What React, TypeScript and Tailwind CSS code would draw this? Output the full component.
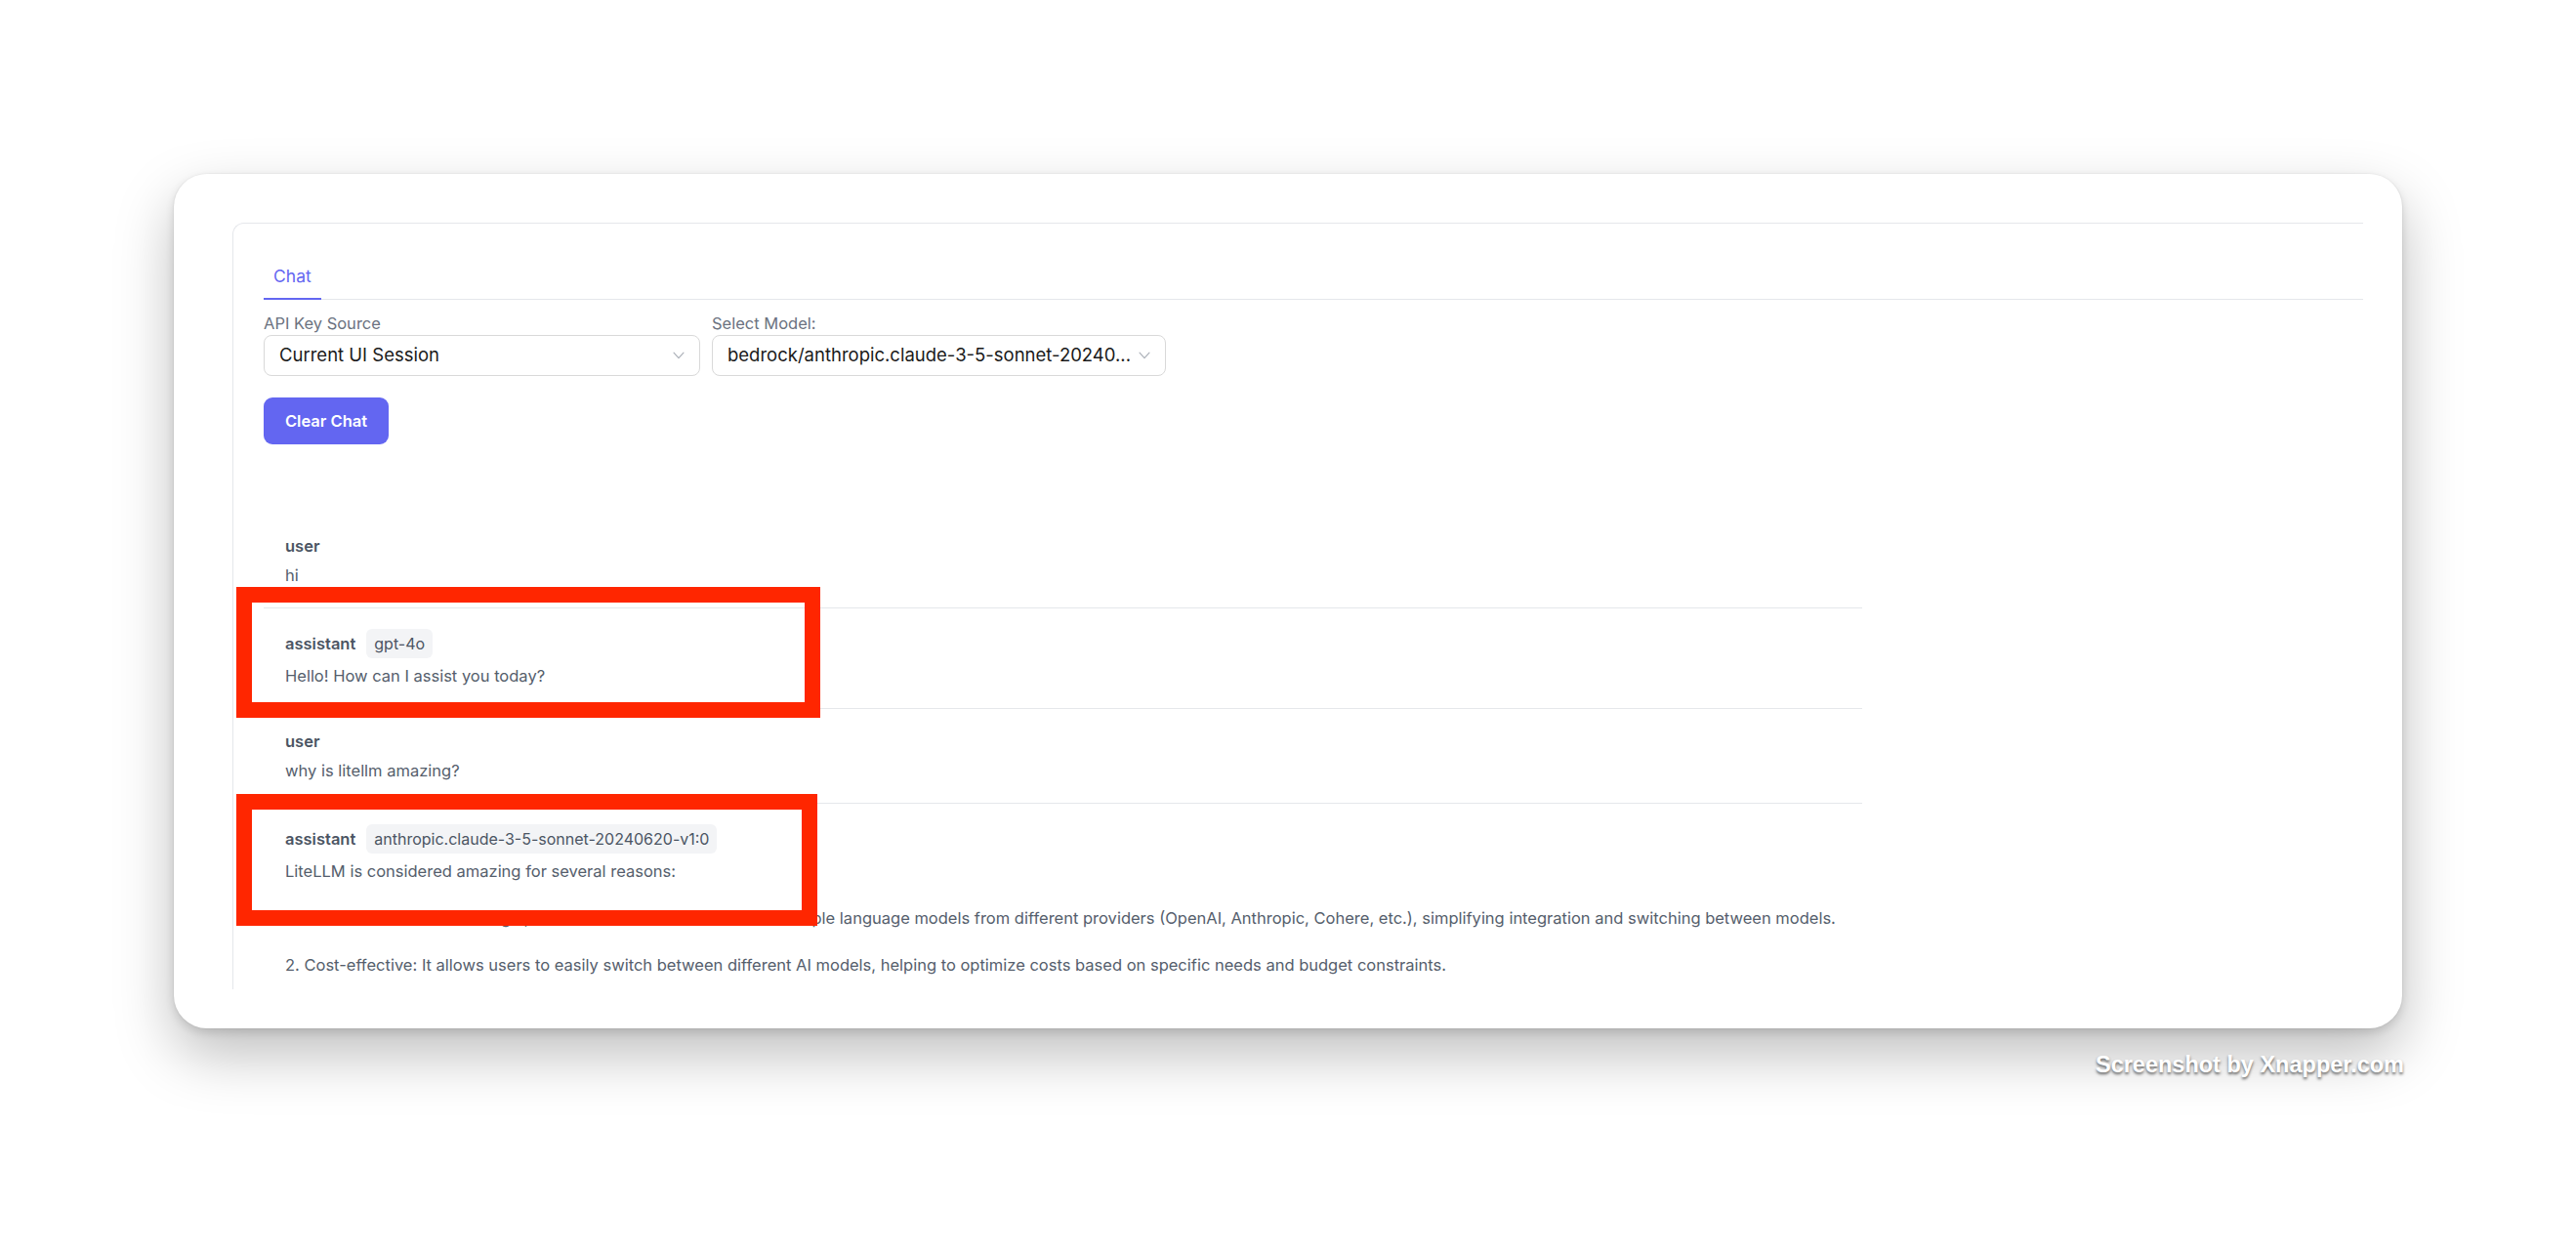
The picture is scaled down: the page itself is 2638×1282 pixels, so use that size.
import React from "react";

const Chevron = () => (
  <svg width="12" height="8" viewBox="0 0 12 8" fill="none" className="shrink-0">
    <path d="M1 1.2 L6 6.6 L11 1.2" stroke="#a9aeb6" strokeWidth="1.1" strokeLinecap="round" strokeLinejoin="round" />
  </svg>
);

type Msg = { role: string; model?: string; text: string };

const messages: Msg[] = [
  { role: "user", text: "hi" },
  { role: "assistant", model: "gpt-4o", text: "Hello! How can I assist you today?" },
  { role: "user", text: "why is litellm amazing?" },
  {
    role: "assistant",
    model: "anthropic.claude-3-5-sonnet-20240620-v1:0",
    text:
      "LiteLLM is considered amazing for several reasons:\n\n1. Unified API: Provides a single, standard interface to work with multiple language models from different providers (OpenAI, Anthropic, Cohere, etc.), simplifying integration and switching between models.\n\n2. Cost-effective: It allows users to easily switch between different AI models, helping to optimize costs based on specific needs and budget constraints.\n\n3. Load balancing: It can distribute requests across multiple models or providers, improving reliability and performance.",
  },
];

export default function App() {
  return (
    <div
      className="relative w-[2638px] h-[1282px] overflow-hidden bg-white pt-[178px] pl-[178px]"
      style={{ fontFamily: "Inter, 'Noto Sans', sans-serif" }}
    >
      <div className="w-[2282px] h-[875px] rounded-[34px] bg-white p-[40px] shadow-[0_0_0_1px_rgba(0,0,0,0.03),0_4px_10px_rgba(0,0,0,0.12),0_26px_60px_rgba(0,0,0,0.26)]">
        <div className="w-full h-full overflow-hidden">
          <div className="ml-[20px] mt-[10px] w-[2400px] h-[900px] border-l border-t border-[#e5e7eb] rounded-tl-[12px] pl-[31px] pt-[43px]">
            {/* Tabs */}
            <div className="flex border-b border-[#e5e7eb]">
              <div className="-mb-px px-[10px] pb-[11px] border-b-2 border-[#6366f1] text-[#6366f1] text-[17.5px] leading-[22px]">
                Chat
              </div>
            </div>

            {/* Selects */}
            <div className="mt-[12px] flex gap-[12px]">
              <div className="w-[447px]">
                <div className="text-[16.5px] leading-[24px] text-[#6b7280]">API Key Source</div>
                <div className="h-[42px] rounded-[8px] border border-[#d9d9d9] bg-white px-[15px] flex items-center justify-between">
                  <span className="text-[18.5px] text-[#1a1a1a]">Current UI Session</span>
                  <Chevron />
                </div>
              </div>
              <div className="w-[465px]">
                <div className="text-[16.5px] leading-[24px] text-[#6b7280]">Select Model:</div>
                <div className="h-[42px] rounded-[8px] border border-[#d9d9d9] bg-white px-[15px] flex items-center justify-between">
                  <span className="text-[18.5px] text-[#1a1a1a] whitespace-nowrap">
                    bedrock/anthropic.claude-3-5-sonnet-20240...
                  </span>
                  <Chevron />
                </div>
              </div>
            </div>

            <button className="mt-[22px] w-[128px] h-[48px] rounded-[9px] bg-[#6366f1] text-white font-semibold text-[16.5px]">
              Clear Chat
            </button>

            {/* Messages */}
            <div className="mt-[71px] w-[1637px]">
              {messages.map((m, i) => (
                <div
                  key={i}
                  className={
                    "pl-[22px] pr-[8px] pt-[21px] pb-[21px] " + (i > 0 ? "border-t border-[#e5e7eb]" : "")
                  }
                >
                  <div className="flex items-center gap-[11px] mb-[6px]">
                    <span className="font-semibold text-[16.5px] leading-[24px] text-[#4b5563]">{m.role}</span>
                    {m.model && (
                      <span className="h-[30px] px-[8px] rounded-[6px] bg-[#f3f4f6] text-[16px] text-[#4b5563] flex items-center">
                        {m.model}
                      </span>
                    )}
                  </div>
                  <div className="whitespace-pre text-[16.5px] leading-[24px] text-[#555e6c]">{m.text}</div>
                </div>
              ))}
            </div>
          </div>
        </div>
      </div>

      <div className="w-[2284px] mt-[23px] text-right">
        <span
          className="text-[23.5px] leading-[28px] font-bold text-white [text-shadow:0_2px_3px_rgba(0,0,0,0.6)]"
          style={{ fontFamily: "'Liberation Sans', Arial, sans-serif" }}
        >
          Screenshot by Xnapper.com
        </span>
      </div>

      {/* Annotation boxes */}
      <div className="absolute left-[242px] top-[601px] w-[598px] h-[134px] border-[16px] border-[#ff2600]" />
      <div className="absolute left-[242px] top-[813px] w-[595px] h-[135px] border-[16px] border-[#ff2600]" />
    </div>
  );
}
